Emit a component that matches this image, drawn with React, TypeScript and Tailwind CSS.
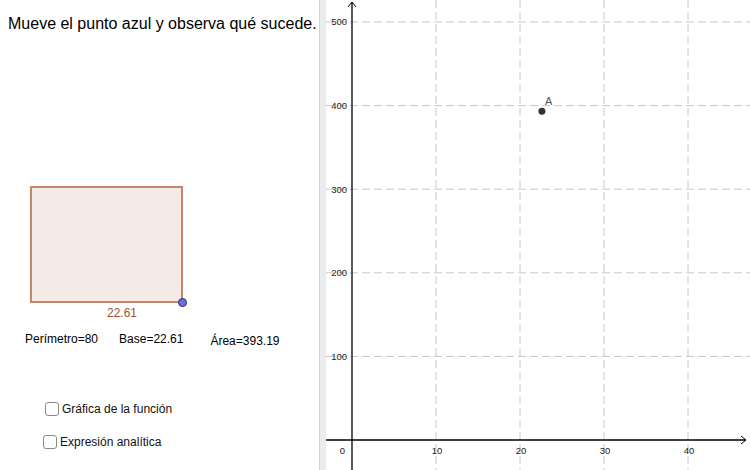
import React from "react";

const OX = 26;
const OY = 440;
const SX = 8.4;
const SY = 0.836;

function Graph() {
  const xs = [10, 20, 30, 40];
  const ys = [100, 200, 300, 400, 500];
  const ax = OX + 22.61 * SX;
  const ay = OY - 393.19 * SY;
  return (
    <svg width={424} height={470} viewBox="0 0 424 470" className="block">
      {xs.map((v) => (
        <line
          key={"vx" + v}
          x1={OX + v * SX}
          x2={OX + v * SX}
          y1={0}
          y2={470}
          stroke="#c8c8c8"
          strokeWidth={1}
          strokeDasharray="8 4"
        />
      ))}
      {ys.map((v) => (
        <line
          key={"hy" + v}
          x1={0}
          x2={424}
          y1={OY - v * SY}
          y2={OY - v * SY}
          stroke="#c8c8c8"
          strokeWidth={1}
          strokeDasharray="8 4"
        />
      ))}
      <line x1={0} x2={420} y1={OY} y2={OY} stroke="#000" strokeWidth={1.3} />
      <polyline points="415,436 420,440 415,444" fill="none" stroke="#000" strokeWidth={1} />
      <line x1={OX} x2={OX} y1={470} y2={2} stroke="#000" strokeWidth={1.3} />
      <polyline points="22,7 26,2 30,7" fill="none" stroke="#000" strokeWidth={1} />
      <g fontFamily="'Liberation Sans', Arial, sans-serif" fontSize={9.5} fill="#222">
        {ys.map((v) => (
          <text key={"ly" + v} x={21} y={OY - v * SY + 3.4} textAnchor="end">
            {v}
          </text>
        ))}
        <text x={16.5} y={454} textAnchor="middle">0</text>
        {xs.map((v) => (
          <text key={"lx" + v} x={OX + v * SX + 1} y={454} textAnchor="middle">
            {v}
          </text>
        ))}
      </g>
      <circle cx={ax} cy={ay} r={3.5} fill="#333" />
      <text x={219} y={105} fontFamily="'Liberation Sans', Arial, sans-serif" fontSize={11} fill="#555">
        A
      </text>
    </svg>
  );
}

function Check({ label, ml, mt }: { label: string; ml: string; mt: string }) {
  return (
    <div className={`flex items-center ${ml} ${mt}`}>
      <div className="w-[14px] h-[14px] rounded-[3px] border border-[#8a8a8a] bg-white" />
      <span className="ml-[3px] text-[12px] leading-[14px] text-[#111]">{label}</span>
    </div>
  );
}

export default function App() {
  return (
    <div className="flex w-[750px] h-[470px] bg-white overflow-hidden font-['Liberation_Sans',Arial,sans-serif]">
      <div className="w-[319px] h-[470px] flex flex-col shrink-0">
        <div className="pt-[14px] pl-[8px] text-[16px] leading-[20px] text-black whitespace-nowrap">
          Mueve el punto azul y observa qué sucede.
        </div>
        <div className="relative ml-[30px] mt-[152px] w-[153px] h-[117px]">
          <div className="w-[153px] h-[117px] border-2 border-[#c8856a] bg-[#f4ebe6]" />
          <div className="absolute left-[148px] top-[112px] w-[9px] h-[9px] rounded-full bg-[#6a6af2] border border-[#333]" />
        </div>
        <div className="ml-[107px] mt-[3px] text-[12px] leading-[14px] text-[#a0522d]">22.61</div>
        <div className="flex mt-[12px] text-[12px] leading-[14px] text-black whitespace-nowrap">
          <span className="ml-[25px]">Perímetro=80</span>
          <span className="ml-[21px]">Base=22.61</span>
          <span className="ml-[27px] mt-[2px]">Área=393.19</span>
        </div>
        <Check label="Gráfica de la función" ml="ml-[45px]" mt="mt-[54px]" />
        <Check label="Expresión analítica" ml="ml-[43px]" mt="mt-[19px]" />
      </div>
      <div className="w-[7px] h-[470px] shrink-0 border-l border-[#d4d4d4] bg-[#ececec]" />
      <div className="flex-1 h-[470px]">
        <Graph />
      </div>
    </div>
  );
}
